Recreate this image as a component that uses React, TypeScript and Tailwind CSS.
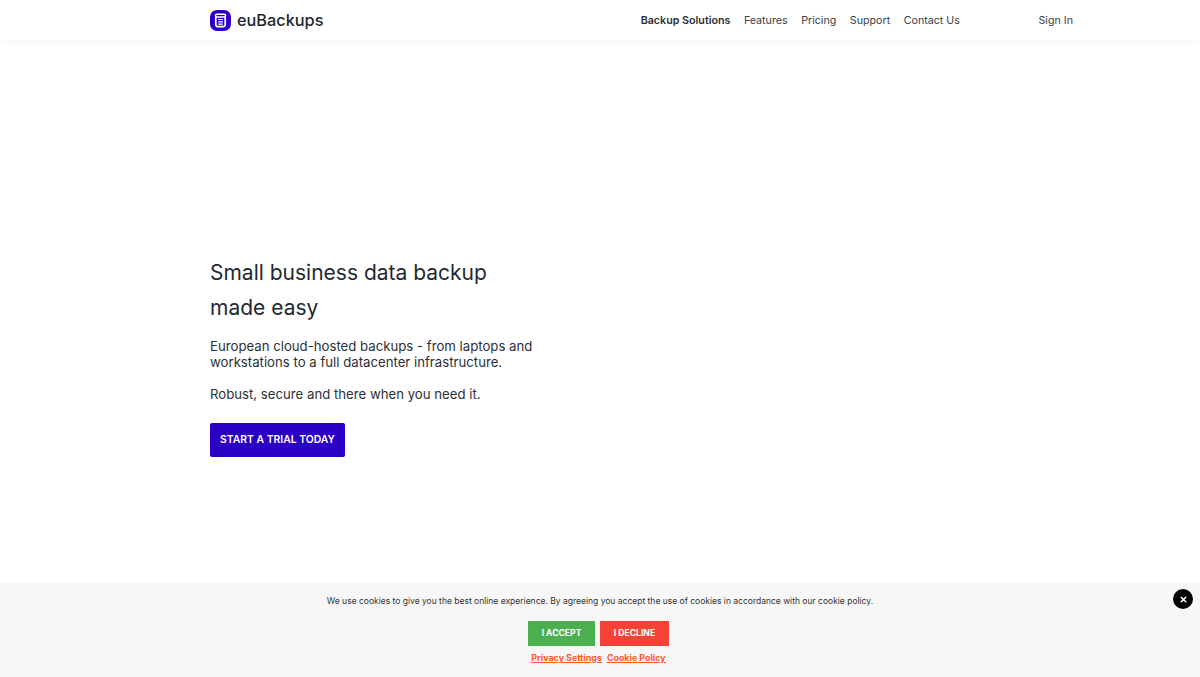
import { X } from 'lucide-react'

const navLinks = ['Features', 'Pricing', 'Support', 'Contact Us']

function Logo() {
  return (
    <svg width="22" height="22" viewBox="0 0 22 22" fill="none">
      <rect x="0" y="0" width="21" height="21" rx="7" fill="#2b00c4" />
      <path d="M5.8 7V14.5a2.2 2.2 0 0 0 2.2 2.2h5a2.2 2.2 0 0 0 2.2-2.2V7" stroke="#fff" strokeWidth="1.7" />
      <rect x="5.5" y="4.3" width="10" height="2.6" rx="1.3" stroke="#fff" strokeWidth="1.5" />
      <path d="M8.2 9.5h4.6M8.2 11.8h4.6M8.2 14.1h4.6" stroke="#fff" strokeWidth="1.2" />
    </svg>
  )
}

function App() {
  return (
    <div className="relative h-[677px] w-full overflow-hidden bg-white font-['Inter',sans-serif] text-[#1f2933]">
      <header className="h-10 bg-white shadow-[0_1px_8px_rgba(0,0,0,0.05)]">
        <div className="mx-auto flex h-full w-[1200px] items-center pt-[1px] pl-[210px] pr-[127px]">
          <div className="flex items-center gap-[5px]">
            <Logo />
            <span className="text-[16.3px] font-medium text-[#22272e]">euBackups</span>
          </div>
          <nav className="ml-auto flex items-center gap-[13.5px] pt-[2px] text-[10.7px] text-[#3a4048]">
            <a className="font-semibold text-[#2b3038]">Backup Solutions</a>
            {navLinks.map((link) => (
              <a key={link}>{link}</a>
            ))}
            <a className="ml-[65px]">Sign In</a>
          </nav>
        </div>
      </header>

      <main className="pl-[210px] pt-[215px]">
        <h1 className="w-[300px] text-[21px] leading-[35px] font-normal text-[#1f2933]">
          Small business data backup made easy
        </h1>
        <p className="mt-[13px] w-[340px] text-[13.2px] leading-4 text-[#2b3038]">
          European cloud-hosted backups - from laptops and workstations to a full datacenter infrastructure.
        </p>
        <p className="mt-4 text-[13.2px] leading-4 text-[#2b3038]">Robust, secure and there when you need it.</p>
        <a className="mt-[21px] flex h-[34px] w-[135px] items-center justify-center rounded-[2px] bg-[#2b00c4] text-[10.4px] font-semibold text-white">
          START A TRIAL TODAY
        </a>
      </main>

      <div className="absolute inset-x-0 bottom-0 flex h-[95px] flex-col items-center bg-[#f7f7f7] pt-[13px]">
        <p className="text-[8.5px] leading-3 text-[#333]">
          We use cookies to give you the best online experience. By agreeing you accept the use of cookies in accordance with our cookie policy.
        </p>
        <div className="mt-[14px] flex gap-[5px] pr-[3px]">
          <button className="h-[25px] w-[67px] bg-[#4caf50] text-[8.6px] font-bold text-white">I ACCEPT</button>
          <button className="h-[25px] w-[69px] bg-[#f44336] text-[8.6px] font-bold text-white">I DECLINE</button>
        </div>
        <div className="mt-[5px] flex gap-[5px] pr-[3px] text-[8.9px] font-bold text-[#ff5722] underline">
          <a>Privacy Settings</a>
          <a>Cookie Policy</a>
        </div>
        <button className="absolute top-[7px] right-[7px] flex h-5 w-5 items-center justify-center rounded-full bg-black text-white">
          <X size={9} strokeWidth={4} />
        </button>
      </div>
    </div>
  )
}

export default App
